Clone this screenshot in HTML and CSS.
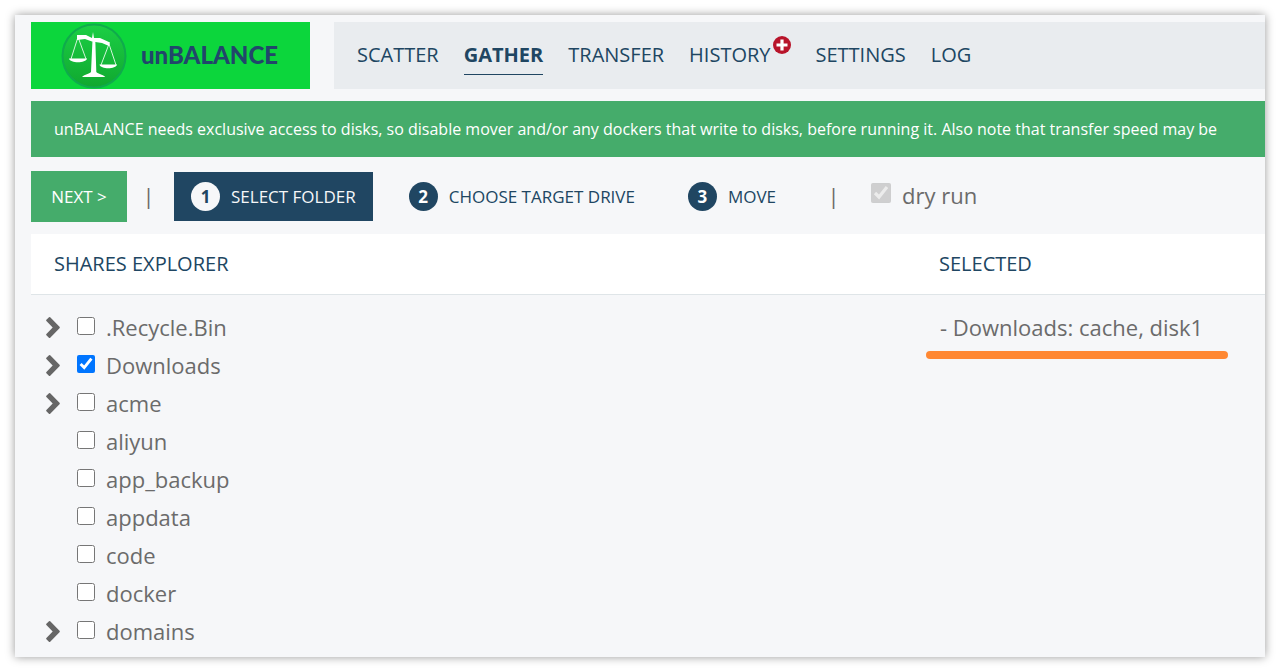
FILE: index.html
```html
<!DOCTYPE html>
<html lang="en">
<head>
    <meta charset="UTF-8">
    <meta name="viewport" content="width=device-width, initial-scale=1.0">
    <title>unBALANCE - Gather</title>
    <link rel="stylesheet" href="styles.css">
</head>
<body>
    <!-- Shared icons -->
    <svg class="sprite" aria-hidden="true">
        <symbol id="chevron" viewBox="0 0 14 21">
            <path d="M3 .3a1 1 0 0 1 1.2 0l9.3 9.5a1 1 0 0 1 0 1.4l-9.3 9.5a1 1 0 0 1-1.3 0L.4 18.2a1 1 0 0 1 0-1.3l6.3-6.4L.4 4.1a1 1 0 0 1 0-1.3z"/>
        </symbol>
    </svg>

    <div class="window">
        <!-- Logo and main menu -->
        <header class="header">
            <a class="logo" href="#">
                <svg class="logo-icon" viewBox="0 0 66 66" aria-hidden="true">
                    <defs>
                        <linearGradient id="disc" x1="0" y1="0" x2="0" y2="1">
                            <stop offset="0" stop-color="#1bcf45"/>
                            <stop offset="1" stop-color="#10a82f"/>
                        </linearGradient>
                    </defs>
                    <circle cx="33" cy="33" r="31.5" fill="url(#disc)" stroke="#0fab4c" stroke-width="2"/>
                    <g fill="none" stroke="#d2f5d9" stroke-width="1">
                        <path d="M17 14L10 36M17 14l8 22M48 21l-8 21M48 21l7 21"/>
                    </g>
                    <g fill="#fff">
                        <path d="M16 12h9l6 3 1-6 1 6 6 0 10 4.500-1 3.500-7-3-10-1.500-7-2.500-8 1z"/>
                        <path d="M31.500 17h2.800l1 32c2 2 6 2 9 5H21c3-3 7-3 9-5z"/>
                        <path d="M8 35.500h18c-1 5-17 5-18 0zM38.500 41.500h17.500c-1 5-16.500 5-17.500 0z"/>
                    </g>
                </svg>
                <span class="logo-text">unBALANCE</span>
            </a>
            <nav class="menu">
                <a href="#">SCATTER</a>
                <a href="#" class="active">GATHER</a>
                <a href="#">TRANSFER</a>
                <a href="#" class="with-badge">HISTORY<svg class="badge" viewBox="0 0 18 18" aria-hidden="true"><circle cx="9" cy="9" r="9" fill="#b8142a"/><path d="M9 3.500v11M3.500 9h11" stroke="#fff" stroke-width="3.200"/></svg></a>
                <a href="#">SETTINGS</a>
                <a href="#">LOG</a>
            </nav>
        </header>

        <p class="notice">unBALANCE needs exclusive access to disks, so disable mover and/or any dockers that write to disks, before running it. Also note that transfer speed may be</p>

        <!-- Wizard steps -->
        <div class="toolbar">
            <button type="button" class="next">NEXT &gt;</button>
            <span class="divider">|</span>
            <ol class="steps">
                <li class="step current"><span class="number">1</span>SELECT FOLDER</li>
                <li class="step"><span class="number">2</span>CHOOSE TARGET DRIVE</li>
                <li class="step"><span class="number">3</span>MOVE</li>
            </ol>
            <span class="divider">|</span>
            <div class="dry-run">
                <input type="checkbox" id="dryRun" checked disabled>
                <label for="dryRun">dry run</label>
            </div>
        </div>

        <!-- Shares tree and current selection -->
        <main class="panels">
            <h2>SHARES EXPLORER</h2>
            <h2>SELECTED</h2>
            <ul class="shares">
                <li>
                    <button type="button" class="expand" aria-label="Expand"><svg><use href="#chevron"/></svg></button>
                    <input type="checkbox" id="recycle"><label for="recycle">.Recycle.Bin</label>
                </li>
                <li>
                    <button type="button" class="expand" aria-label="Expand"><svg><use href="#chevron"/></svg></button>
                    <input type="checkbox" id="downloads" checked><label for="downloads">Downloads</label>
                </li>
                <li>
                    <button type="button" class="expand" aria-label="Expand"><svg><use href="#chevron"/></svg></button>
                    <input type="checkbox" id="acme"><label for="acme">acme</label>
                </li>
                <li class="leaf"><input type="checkbox" id="aliyun"><label for="aliyun">aliyun</label></li>
                <li class="leaf"><input type="checkbox" id="appBackup"><label for="appBackup">app_backup</label></li>
                <li class="leaf"><input type="checkbox" id="appdata"><label for="appdata">appdata</label></li>
                <li class="leaf"><input type="checkbox" id="code"><label for="code">code</label></li>
                <li class="leaf"><input type="checkbox" id="docker"><label for="docker">docker</label></li>
                <li>
                    <button type="button" class="expand" aria-label="Expand"><svg><use href="#chevron"/></svg></button>
                    <input type="checkbox" id="domains"><label for="domains">domains</label>
                </li>
            </ul>
            <div class="selected">
                <p>- Downloads: cache, disk1</p>
                <div class="marker"></div>
            </div>
        </main>
    </div>
</body>
</html>
```
FILE: styles.css
```css
* {
    box-sizing: border-box;
}
body {
    margin: 0;
    padding: 15px 15px 14px;
    background-color: #fff;
    color: #6b6b6b;
    font-family: "Open Sans", "Noto Sans", sans-serif;
    font-size: 22px;
}
h2, p, ul, ol {
    margin: 0;
    padding: 0;
    font-weight: normal;
    list-style: none;
}
a {
    color: inherit;
    text-decoration: none;
}
button {
    border: 0;
    padding: 0;
    font-family: inherit;
    cursor: pointer;
}
.sprite {
    display: none;
}
.window {
    padding: 7px 0 7px 16px;
    background-color: #f6f7f9;
    box-shadow: 0 0 9px rgba(0, 0, 0, 0.4);
    overflow: hidden;
}

/* header */
.header {
    display: flex;
    gap: 24px;
    color: #204662;
}
.logo {
    display: flex;
    align-items: center;
    flex: none;
    gap: 14px;
    width: 279px;
    height: 67px;
    padding-left: 30px;
    background-color: #0cd63c;
}
.logo-icon {
    flex: none;
    width: 66px;
    height: 66px;
}
.logo-text {
    padding-bottom: 3px;
    color: #21466b;
    font-family: Lato, sans-serif;
    font-size: 24px;
    font-weight: 900;
}
.menu {
    display: flex;
    flex: 1;
    align-items: center;
    gap: 25px;
    padding-left: 23px;
    background-color: #e9ecef;
    font-size: 20px;
    line-height: 38px;
}
.menu a {
    border-bottom: 1px solid transparent;
    white-space: nowrap;
}
.menu .active {
    border-color: #204662;
    font-weight: bold;
}
.menu .with-badge {
    position: relative;
    padding-right: 20px;
}
.badge {
    position: absolute;
    top: 0;
    right: 0;
    width: 18px;
    height: 18px;
}

.notice {
    margin-top: 12px;
    padding-left: 23px;
    background-color: #45ac6b;
    color: #fff;
    font-size: 16px;
    line-height: 56px;
    white-space: nowrap;
}

/* toolbar */
.toolbar {
    display: flex;
    align-items: center;
    margin: 14px 0 12px;
}
.next {
    width: 96px;
    height: 51px;
    background-color: #45ac6b;
    color: #fff;
    font-size: 17px;
}
.divider {
    width: 43px;
    margin-right: 4px;
    padding-bottom: 3px;
    text-align: center;
}
.steps {
    display: flex;
    color: #204662;
    font-size: 17px;
}
.step {
    display: flex;
    align-items: center;
    gap: 11px;
    height: 49px;
    margin-right: 19px;
    padding: 0 17px;
    white-space: nowrap;
}
.current {
    background-color: #204662;
    color: #f6f7f9;
}
.number {
    width: 29px;
    border-radius: 50%;
    background-color: #204662;
    color: #fff;
    font-weight: bold;
    line-height: 29px;
    text-align: center;
}
.current .number {
    background-color: #f6f7f9;
    color: #204662;
}
.dry-run {
    display: flex;
    align-items: center;
    gap: 11px;
    margin-left: 12px;
    padding-bottom: 4px;
}
.dry-run input {
    width: 20px;
    height: 20px;
    margin: 0 0 3px;
}

/* panels */
.panels {
    display: grid;
    grid-template-columns: 1fr 349px;
}
.panels h2 {
    padding: 0 23px;
    border-bottom: 1px solid #dfe5e8;
    background-color: #fff;
    color: #204662;
    font-size: 20px;
    line-height: 60px;
}
.shares {
    padding: 13px 0 0 15px;
}
.shares li {
    display: flex;
    align-items: center;
    height: 38px;
}
.shares .leaf {
    padding-left: 31px;
}
.shares input {
    width: 18px;
    height: 18px;
    margin: 0 11px 2px 0;
}
.expand {
    width: 31px;
    height: 21px;
    background: none;
}
.expand svg {
    display: block;
    width: 14px;
    height: 21px;
    fill: #666;
}
.selected {
    padding: 13px 0 0 24px;
    line-height: 38px;
}
.marker {
    width: 302px;
    height: 8px;
    margin: 5px 0 0 -14px;
    border-radius: 4px;
    background-color: #ff8833;
}
```
